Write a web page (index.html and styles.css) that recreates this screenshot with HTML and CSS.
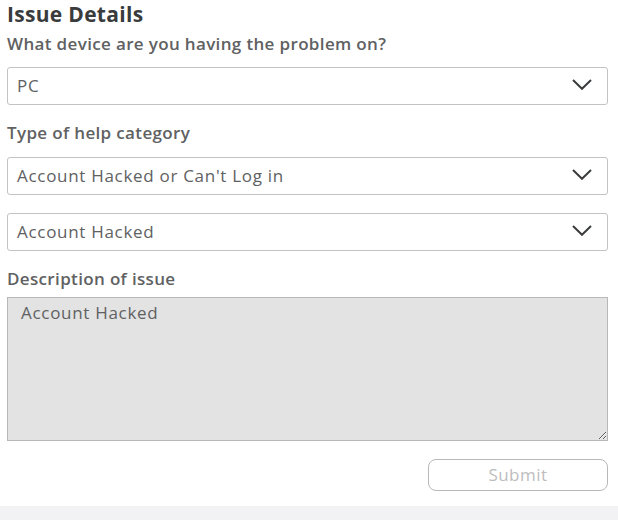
FILE: index.html
```html
<!DOCTYPE html>
<html lang="en">
<head>
    <meta charset="UTF-8">
    <title>Issue Details</title>
    <link rel="stylesheet" href="styles.css">
</head>
<body>
    <div class="form">
        <h2 class="title">Issue Details</h2>

        <label class="label label-first">What device are you having the problem on?</label>
        <div class="select">
            <span>PC</span>
            <svg class="chevron" width="20" height="11" viewBox="0 0 20 11"><path d="M1 1 L10 9.8 L19 1" fill="none" stroke="#393b3d" stroke-width="2"/></svg>
        </div>

        <label class="label">Type of help category</label>
        <div class="select">
            <span>Account Hacked or Can't Log in</span>
            <svg class="chevron" width="20" height="11" viewBox="0 0 20 11"><path d="M1 1 L10 9.8 L19 1" fill="none" stroke="#393b3d" stroke-width="2"/></svg>
        </div>
        <div class="select select-sub">
            <span>Account Hacked</span>
            <svg class="chevron" width="20" height="11" viewBox="0 0 20 11"><path d="M1 1 L10 9.8 L19 1" fill="none" stroke="#393b3d" stroke-width="2"/></svg>
        </div>

        <label class="label label-desc">Description of issue</label>
        <textarea class="description" disabled>Account Hacked</textarea>

        <div class="actions">
            <button class="submit" disabled>Submit</button>
        </div>
    </div>
    <div class="footer-strip"></div>
</body>
</html>
```

FILE: styles.css
```css
body {
    margin: 0;
    font-family: "Open Sans", Arial, sans-serif;
    background-color: #ffffff;
    color: #393b3d;
}
.form {
    width: 601px;
    margin-left: 7px;
    display: flex;
    flex-direction: column;
}
.title {
    margin: 0;
    font-size: 21px;
    font-weight: 700;
    line-height: 28px;
    letter-spacing: 0.3px;
    color: #393b3d;
}
.label {
    display: block;
    font-size: 17px;
    font-weight: 600;
    line-height: 22px;
    letter-spacing: 0.35px;
    color: #606162;
    margin-top: 17px;
    margin-bottom: 13px;
}
.label-first {
    margin-top: 5px;
    margin-bottom: 12px;
}
.label-desc {
    margin-bottom: 7px;
}
.select {
    box-sizing: border-box;
    height: 38px;
    border: 1px solid #c3c3c3;
    border-radius: 3px;
    padding: 0 15px 2px 9px;
    display: flex;
    align-items: center;
    justify-content: space-between;
    font-size: 17px;
    letter-spacing: 0.7px;
    color: #606162;
}
.select-sub {
    margin-top: 18px;
}
.chevron {
    display: block;
    margin-top: -1px;
}
.description {
    box-sizing: border-box;
    height: 144px;
    width: 100%;
    margin: 0;
    padding: 4px 13px;
    background-color: #e3e3e3;
    border: 1px solid #b8b8b8;
    border-radius: 0;
    font-family: "Open Sans", Arial, sans-serif;
    font-size: 17px;
    letter-spacing: 0.7px;
    line-height: 22px;
    color: #606162;
    resize: both;
}
.actions {
    display: flex;
    justify-content: flex-end;
    margin-top: 18px;
}
.submit {
    width: 180px;
    height: 32px;
    padding-bottom: 2px;
    background: #ffffff;
    border: 1px solid #b8b8b8;
    border-radius: 8px;
    font-family: "Open Sans", Arial, sans-serif;
    font-size: 17px;
    font-weight: 500;
    letter-spacing: 0.5px;
    color: #bdbdbd;
}
.footer-strip {
    margin-top: 15px;
    height: 14px;
    background-color: #f2f2f4;
}
```
